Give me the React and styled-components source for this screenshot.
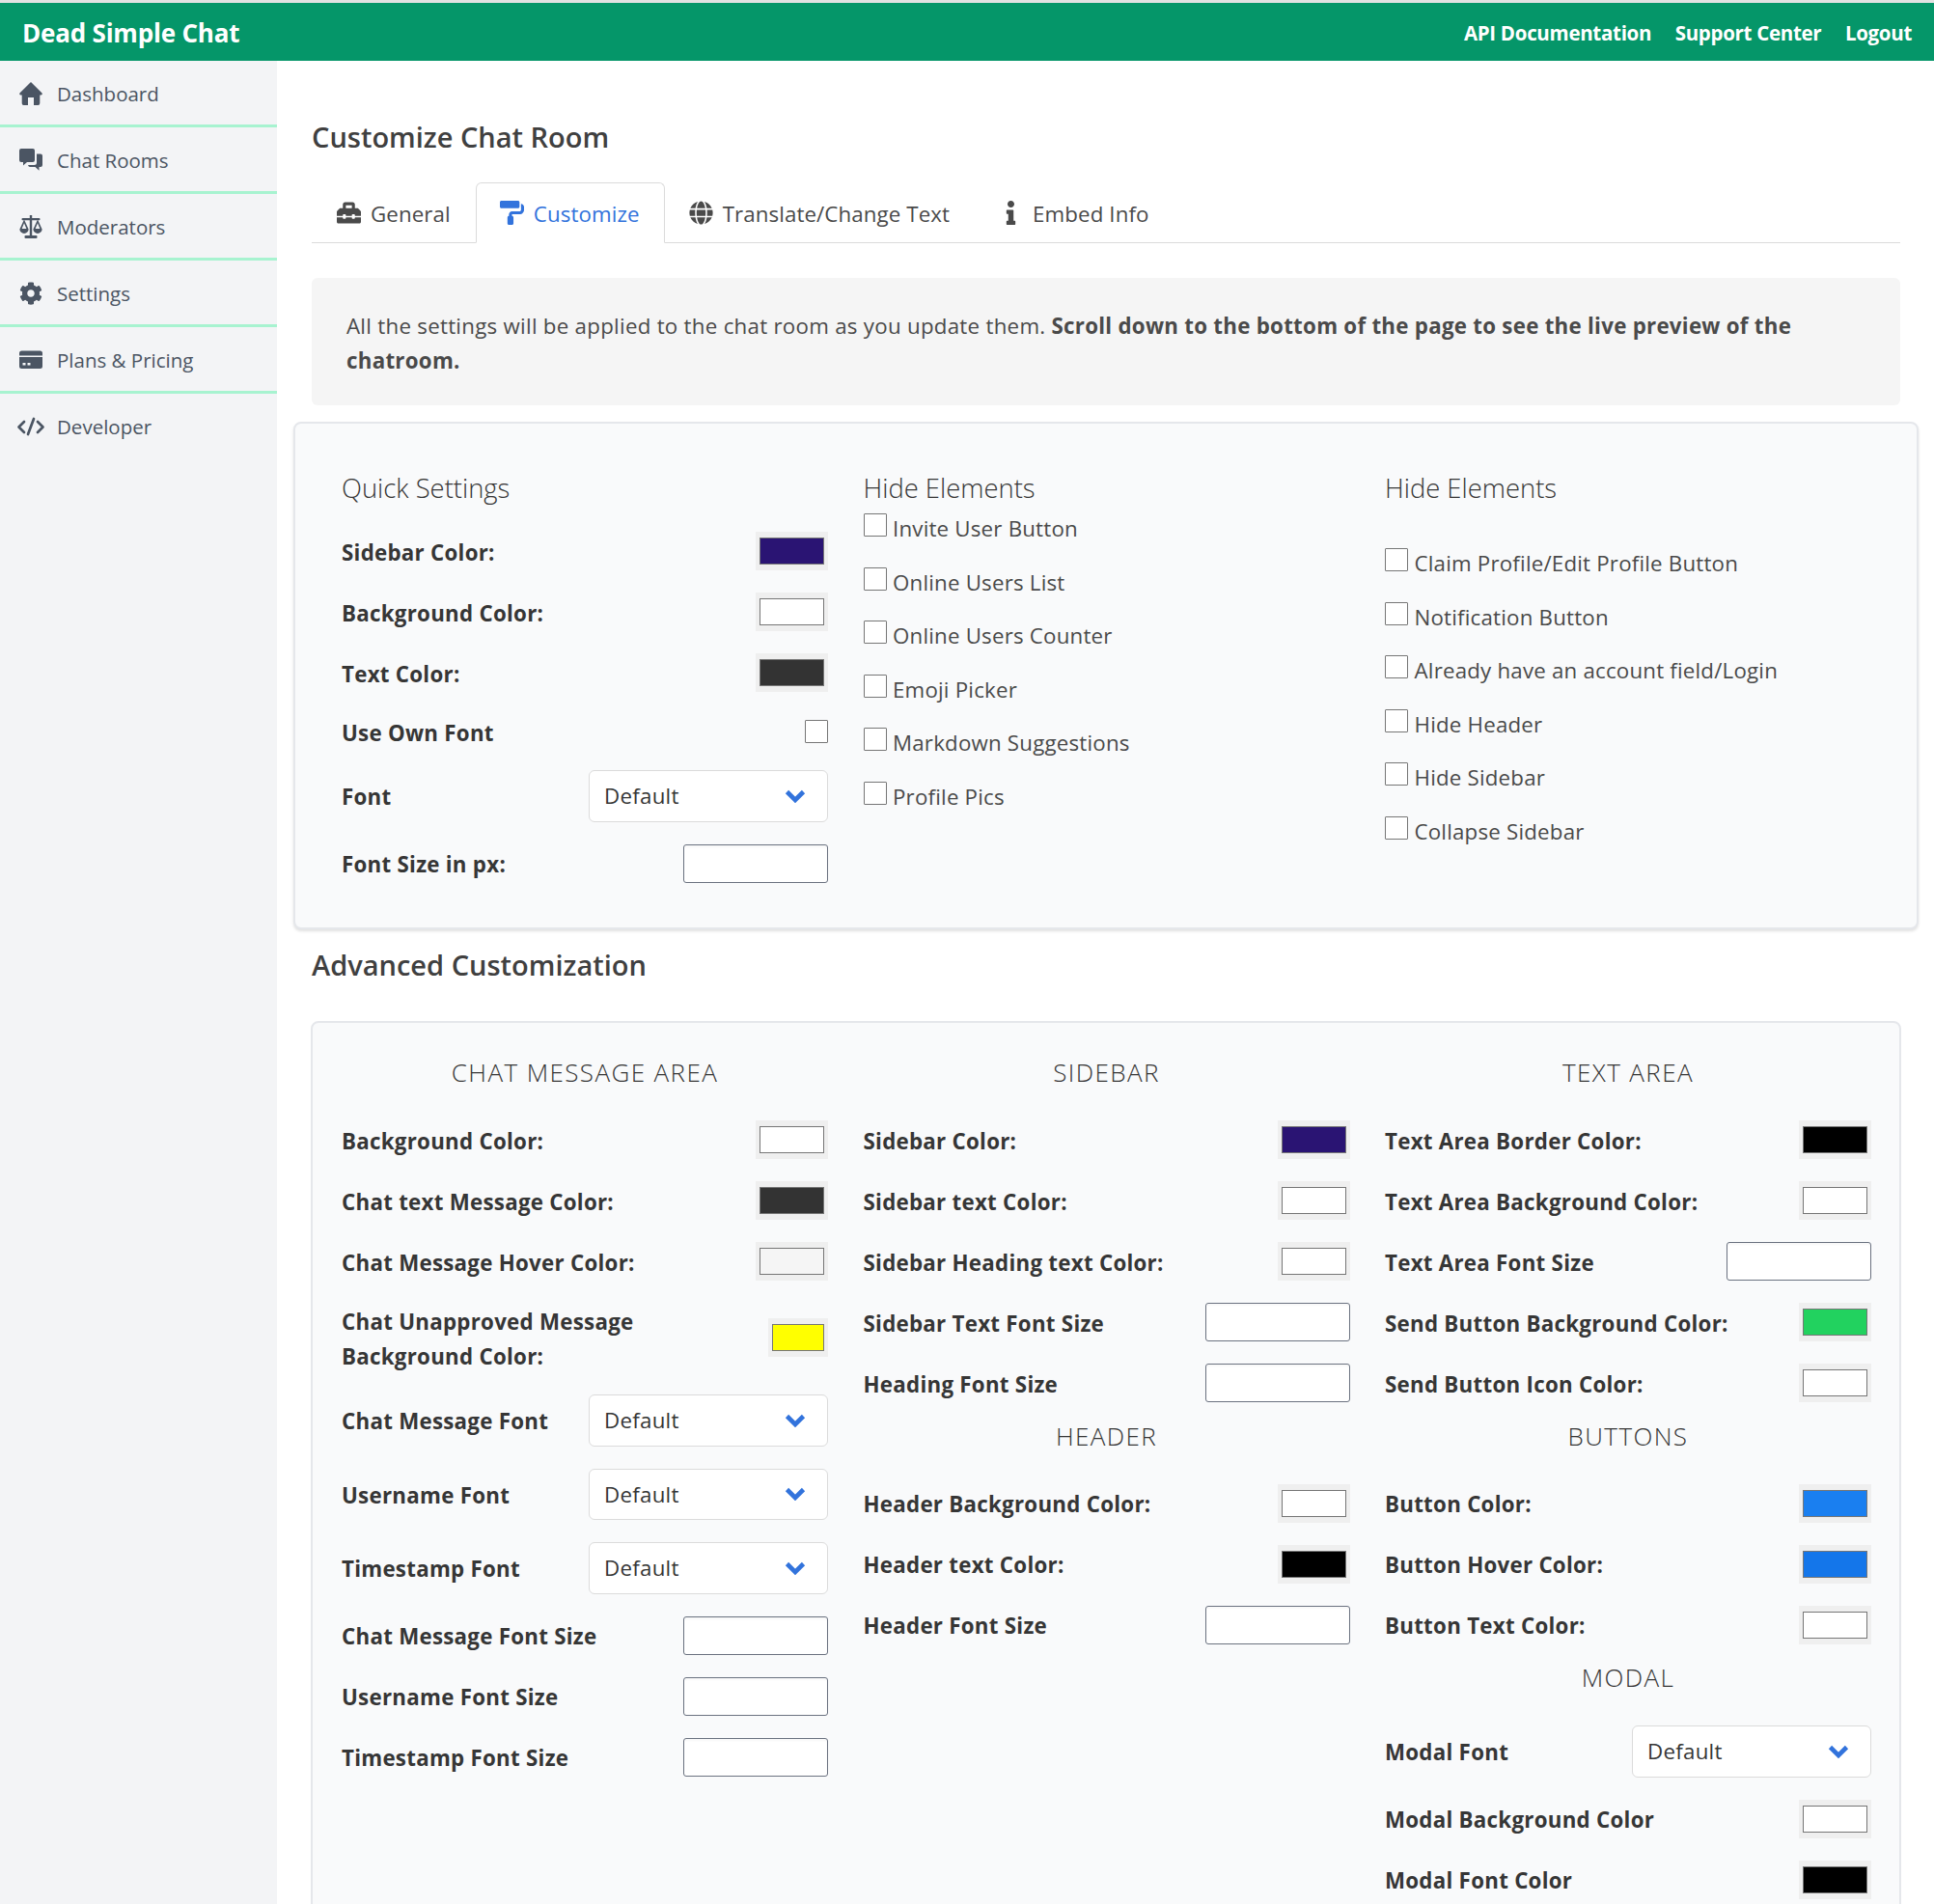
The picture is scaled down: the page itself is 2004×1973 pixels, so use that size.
import React from 'react';
import styled, { createGlobalStyle } from 'styled-components';
import { FaCog, FaToolbox, FaPaintRoller, FaGlobe, FaInfo } from 'react-icons/fa';

const Global = createGlobalStyle`
  html, body { margin: 0; padding: 0; background: #fff; }
  body { font-family: "Open Sans", "Noto Sans", sans-serif; font-size: 22.3px; letter-spacing: 0.27px; color: #4a4a4a; }
  * { box-sizing: border-box; }
`;
const Page = styled.div`height: 1973px; overflow: hidden; display: flex; flex-direction: column; border-top: 3px solid #e2e2e2;`;
const TopBar = styled.header`
  height: 60px; flex: none; background: #059669; color: #fff; display: flex; align-items: center;
  justify-content: space-between; padding: 1px 23px 0 23px;
`;
const Brand = styled.div`font-size: 26px; font-weight: 700; letter-spacing: -0.2px;`;
const TopLinks = styled.nav`display: flex; gap: 24.5px;`;
const TopLink = styled.a`font-size: 20.5px; font-weight: 700; letter-spacing: -0.3px;`;
const Body = styled.div`flex: 1; display: flex; min-height: 0;`;
const Sidebar = styled.aside`width: 287px; flex: none; background: #f3f4f6;`;
const SideItem = styled.a`
  height: 69px; display: flex; align-items: center; gap: 15px; padding: 1px 0 0 20px; color: #4b5563; font-size: 20.5px; letter-spacing: 0;
  border-bottom: 3px solid ${p => (p.$last ? 'transparent' : '#a7f3d0')};
  svg { width: 24px; height: 24px; flex: none; fill: #4b5563; overflow: visible; }
`;
const Main = styled.main`flex: 1; min-width: 0; padding: 59px 35px 0 36px;`;
const PageTitle = styled.h1`margin: 0; font-size: 29px; line-height: 40px; font-weight: 600; letter-spacing: 0; color: #404040;`;
const TabStrip = styled.div`margin-top: 27px; height: 63px; display: flex; align-items: stretch; padding-left: 1px; border-bottom: 1px solid #dbdbdb;`;
const Tab = styled.a`
  display: flex; align-items: center; padding: 0 25px 0 21px; margin-bottom: -1px; letter-spacing: 0.1px;
  color: ${p => (p.$active ? '#3273dc' : '#4a4a4a')};
  border: 1px solid ${p => (p.$active ? '#dbdbdb' : 'transparent')};
  border-bottom-color: ${p => (p.$active ? '#fff' : 'transparent')};
  border-radius: 6px 6px 0 0; background: ${p => (p.$active ? '#fff' : 'transparent')};
`;
const TabLabel = styled.span`margin-top: 2px;`;
const TabIcon = styled.span`
  width: 31px; margin-right: 7px; display: flex; justify-content: center;
  svg { width: 25px; height: 25px; fill: currentColor; }
`;
const Notice = styled.p`margin: 36px 0 0; background: #f5f5f5; border-radius: 6px; padding: 32px 36px; line-height: 36px; height: 132px;
  strong { color: #4a4a4a; font-weight: 700; }
`;
const QuickCard = styled.section`
  margin: 17px -19px 0 -19px; height: 526px; background: #f9fafb; border: 2px solid #e5e7eb; border-radius: 8px;
  box-shadow: 0 2px 3px rgba(0,0,0,.12); padding: 49px 48px 0;
`;
const Grid = styled.div`display: grid; grid-template-columns: repeat(3, 504px); column-gap: 36.5px;`;
const Column = styled.div`display: flex; flex-direction: column;`;
const ColumnHeading = styled.h3`margin: 0; font-size: 27.4px; font-weight: 300; letter-spacing: 0; line-height: 36px; color: #363636;`;
const Rows = styled.div`display: flex; flex-direction: column; gap: 23px; margin-top: ${p => p.$top || 32}px;`;
const Row = styled.div`display: flex; align-items: center; justify-content: space-between; ${p => p.$tight && 'margin-bottom: -1px;'}`;
const Label = styled.label`font-weight: 700; color: #363636; line-height: 36px; margin: 1.5px 0 -1.5px; ${p => p.$narrow && 'max-width: 340px;'}`;
const Swatch = styled.span`
  flex: none; width: ${p => (p.$small ? 62 : 75)}px; height: 40px; background: #efefef; padding: 6px 4px; display: flex;
  &::after { content: ''; flex: 1; border: 1px solid #767676; background: ${p => p.$color}; }
`;
const Box = styled.input`width: 24px; height: 24px; margin: 0; appearance: none; background: #fff; border: 1px solid #767676; flex: none; border-radius: 1px;`;
const TextInput = styled.input`width: ${p => p.$w || 150}px; height: 40px; flex: none; background: #fff; border: 1px solid #6b7280; border-radius: 3px; box-shadow: inset 0 2px 2px rgba(0,0,0,.03);`;
const Select = styled.div`
  width: 248px; height: 53.6px; flex: none; background: #fff; border: 1px solid #dbdbdb; border-radius: 6px; display: flex;
  align-items: center; justify-content: space-between; padding: 0 22px 0 15px; color: #363636;
  svg { width: 22px; height: 14px; }
`;
const CheckList = styled.div`display: flex; flex-direction: column; gap: 20px; margin-top: ${p => p.$top}px;`;
const CheckRow = styled.label`display: flex; align-items: flex-start; gap: 6.5px; line-height: 35.5px; height: 35.5px; color: #4a4a4a; letter-spacing: 0.2px;
  input { margin-top: 2px; }
`;
const SubHeading = styled.h2`margin: 17px 0 38px; font-size: 29px; line-height: 40px; font-weight: 600; letter-spacing: 0; color: #404040;`;
const AdvCard = styled.section`margin: 0 -1px; height: 1100px; background: #f9fafb; border: 2px solid #e5e7eb; border-radius: 8px; padding: 33px 30px 0;`;
const SectionGroup = styled.div`display: flex; flex-direction: column; gap: 16.6px;`;
const SectionTitle = styled.h3`margin: 0; text-align: center; font-size: 26px; font-weight: 300; line-height: 36px; letter-spacing: 1.4px; text-transform: uppercase; color: #363636;`;

const Chevron = () => (
  <svg viewBox="0 0 22 14"><polyline points="2.5,2.5 11,11 19.5,2.5" fill="none" stroke="#3273dc" strokeWidth="4.6" /></svg>
);
const HomeIcon = () => (
  <svg viewBox="0 0 24 24"><path d="M12 0 L23.6 11.6 Q24.4 13.5 22.5 13.5 H21.3 V22 Q21.3 24 19.5 24 H15 V16 H9 V24 H4.5 Q2.7 24 2.7 22 V13.5 H1.5 Q-.4 13.5 .4 11.6 Z" /></svg>
);
const ChatIcon = () => (
  <svg viewBox="0 0 24 24">
    <path d="M2 0 H14 Q16 0 16 2 V12 Q16 14 14 14 H8 L4 17.5 V14 H2 Q0 14 0 12 V2 Q0 0 2 0 Z" />
    <path d="M18 5.5 H22 Q24 5.5 24 7.5 V17 Q24 19 22 19 H20.5 V22.7 L16.5 19 H11 Q9.5 19 9 17 H15.5 Q18 17 18 14.5 Z" />
  </svg>
);
const ScaleIcon = () => (
  <svg viewBox="0 0 24 24">
    <rect x="10.8" y="0" width="2.4" height="21" />
    <rect x="5.5" y="21" width="13" height="3" rx="1" />
    <rect x="2.5" y="3" width="19" height="2.2" rx="1" />
    <path fillRule="evenodd" d="M5 4.5 L9.6 14.5 A4.6 4.4 0 0 1 .4 14.5 Z M5 8.2 L2.6 14 H7.4 Z" />
    <path fillRule="evenodd" d="M19 4.5 L23.6 14.5 A4.6 4.4 0 0 1 14.4 14.5 Z M19 8.2 L16.6 14 H21.4 Z" />
  </svg>
);
const CardIcon = () => (
  <svg viewBox="0 0 24 24">
    <path d="M2.5 2.5 H21.5 Q24 2.5 24 5 V7.5 H0 V5 Q0 2.5 2.5 2.5 Z" />
    <path fillRule="evenodd" d="M0 9 H24 V18.5 Q24 21 21.5 21 H2.5 Q0 21 0 18.5 Z M3.5 15 V17.5 H6.5 V15 Z M8.5 15 V17.5 H11.5 V15 Z" />
  </svg>
);
const CodeIcon = () => (
  <svg viewBox="0 0 24 24" style={{ fill: 'none' }}>
    <g fill="none" stroke="#4b5563" strokeWidth="2.7" strokeLinecap="round" strokeLinejoin="round">
      <polyline points="5,7 -0.5,12.5 5,18" />
      <line x1="15" y1="4" x2="9" y2="20" />
      <polyline points="19,7 24.5,12.5 19,18" />
    </g>
  </svg>
);

const C = ({ label, color, small }) => <Row><Label $narrow={small}>{label}</Label><Swatch $color={color} $small={small} /></Row>;
const I = ({ label }) => <Row><Label>{label}</Label><TextInput type="text" /></Row>;
const S = ({ label }) => <Row><Label>{label}</Label><Select>Default<Chevron /></Select></Row>;
const K = ({ label }) => <CheckRow><Box type="checkbox" /><span>{label}</span></CheckRow>;

const side = [['Dashboard', HomeIcon], ['Chat Rooms', ChatIcon], ['Moderators', ScaleIcon], ['Settings', FaCog], ['Plans & Pricing', CardIcon], ['Developer', CodeIcon]];
const tabs = [['General', FaToolbox], ['Customize', FaPaintRoller, true], ['Translate/Change Text', FaGlobe], ['Embed Info', FaInfo]];

export default function App() {
  return (
    <Page>
      <Global />
      <TopBar>
        <Brand>Dead Simple Chat</Brand>
        <TopLinks>
          <TopLink>API Documentation</TopLink><TopLink>Support Center</TopLink><TopLink>Logout</TopLink>
        </TopLinks>
      </TopBar>
      <Body>
        <Sidebar>
          {side.map(([t, Ico], i) => <SideItem key={t} $last={i === side.length - 1}><Ico />{t}</SideItem>)}
        </Sidebar>
        <Main>
          <PageTitle>Customize Chat Room</PageTitle>
          <TabStrip>
            {tabs.map(([t, Ico, a]) => <Tab key={t} $active={a}><TabIcon><Ico /></TabIcon><TabLabel>{t}</TabLabel></Tab>)}
          </TabStrip>
          <Notice>All the settings will be applied to the chat room as you update them. <strong>Scroll down to the bottom of the page to see the live preview of the</strong> <strong>chatroom.</strong></Notice>
          <QuickCard>
            <Grid>
              <Column>
                <ColumnHeading>Quick Settings</ColumnHeading>
                <Rows $top={27}>
                  <C label="Sidebar Color:" color="#2a1473" />
                  <C label="Background Color:" color="#fff" />
                  <C label="Text Color:" color="#333" />
                  <Row $tight><Label>Use Own Font</Label><Box type="checkbox" /></Row>
                  <S label="Font" />
                  <I label="Font Size in px:" />
                </Rows>
              </Column>
              <Column>
                <ColumnHeading>Hide Elements</ColumnHeading>
                <CheckList $top={6}>
                  {['Invite User Button', 'Online Users List', 'Online Users Counter', 'Emoji Picker', 'Markdown Suggestions', 'Profile Pics'].map(t => <K key={t} label={t} />)}
                </CheckList>
              </Column>
              <Column>
                <ColumnHeading>Hide Elements</ColumnHeading>
                <CheckList $top={42}>
                  {['Claim Profile/Edit Profile Button', 'Notification Button', 'Already have an account field/Login', 'Hide Header', 'Hide Sidebar', 'Collapse Sidebar'].map(t => <K key={t} label={t} />)}
                </CheckList>
              </Column>
            </Grid>
          </QuickCard>
          <SubHeading>Advanced Customization</SubHeading>
          <AdvCard>
            <Grid>
              <Column>
                <SectionTitle>Chat Message Area</SectionTitle>
                <Rows>
                  <C label="Background Color:" color="#fff" />
                  <C label="Chat text Message Color:" color="#333" />
                  <C label="Chat Message Hover Color:" color="#f5f5f5" />
                  <C label="Chat Unapproved Message Background Color:" color="#ffff00" small />
                  <S label="Chat Message Font" />
                  <S label="Username Font" />
                  <S label="Timestamp Font" />
                  <I label="Chat Message Font Size" />
                  <I label="Username Font Size" />
                  <I label="Timestamp Font Size" />
                </Rows>
              </Column>
              <SectionGroup>
                <Column>
                  <SectionTitle>Sidebar</SectionTitle>
                  <Rows>
                    <C label="Sidebar Color:" color="#2a1473" />
                    <C label="Sidebar text Color:" color="#fff" />
                    <C label="Sidebar Heading text Color:" color="#fff" />
                    <I label="Sidebar Text Font Size" />
                    <I label="Heading Font Size" />
                  </Rows>
                </Column>
                <Column>
                  <SectionTitle>Header</SectionTitle>
                  <Rows>
                    <C label="Header Background Color:" color="#fff" />
                    <C label="Header text Color:" color="#000" />
                    <I label="Header Font Size" />
                  </Rows>
                </Column>
              </SectionGroup>
              <SectionGroup>
                <Column>
                  <SectionTitle>Text Area</SectionTitle>
                  <Rows>
                    <C label="Text Area Border Color:" color="#000" />
                    <C label="Text Area Background Color:" color="#fff" />
                    <I label="Text Area Font Size" />
                    <C label="Send Button Background Color:" color="#22d25f" />
                    <C label="Send Button Icon Color:" color="#fff" />
                  </Rows>
                </Column>
                <Column>
                  <SectionTitle>Buttons</SectionTitle>
                  <Rows>
                    <C label="Button Color:" color="#1a7ff0" />
                    <C label="Button Hover Color:" color="#1476ea" />
                    <C label="Button Text Color:" color="#fff" />
                  </Rows>
                </Column>
                <Column>
                  <SectionTitle>Modal</SectionTitle>
                  <Rows>
                    <S label="Modal Font" />
                    <C label="Modal Background Color" color="#fff" />
                    <C label="Modal Font Color" color="#000" />
                  </Rows>
                </Column>
              </SectionGroup>
            </Grid>
          </AdvCard>
        </Main>
      </Body>
    </Page>
  );
}
